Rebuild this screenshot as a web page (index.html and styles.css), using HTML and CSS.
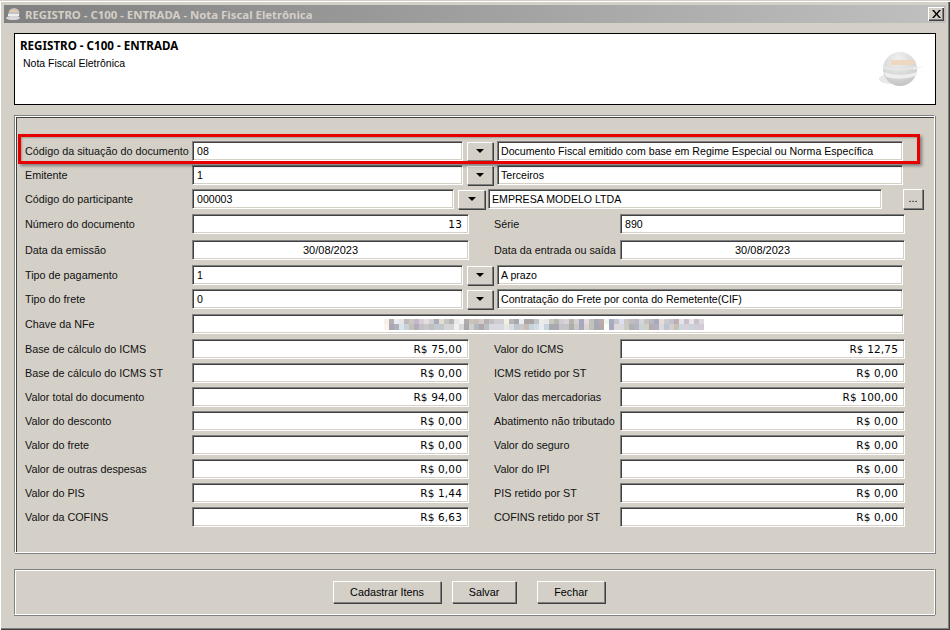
FILE: index.html
```html
<!DOCTYPE html>
<html lang="pt-BR">
<head>
<meta charset="utf-8">
<title>REGISTRO - C100 - ENTRADA</title>
<link rel="stylesheet" href="styles.css">
</head>
<body>
<div class="window">
  <div class="titlebar">
    <svg class="title-icon" width="16" height="14" viewBox="0 0 16 14"><ellipse cx="8" cy="6.500" rx="5.500" ry="5.500" fill="#c4c4c4"/><path d="M4 3h8v2H4z" fill="#e4c8a8"/><path d="M2 7h11v2H2z" fill="#eeeeee"/><ellipse cx="7" cy="11" rx="7" ry="2" fill="#d8d8d8"/></svg>
    <span class="title-text">REGISTRO - C100 - ENTRADA - Nota Fiscal Eletrônica</span>
    <span class="close"><svg width="9" height="8" viewBox="0 0 9 8"><path d="M0 0h2l2.500 3 2.500-3h2L5.500 4 9 8H7L4.500 5 2 8H0l3.500-4z" fill="#000"/></svg></span>
  </div>
  <div class="header">
    <div class="header-text">
      <div class="header-title">REGISTRO - C100 - ENTRADA</div>
      <div class="header-sub">Nota Fiscal Eletrônica</div>
    </div>
    <svg class="logo" width="48" height="38" viewBox="0 0 48 38">
      <defs>
        <radialGradient id="g" cx="0.45" cy="0.2" r="0.85"><stop offset="0" stop-color="#f0f0f0"/><stop offset="0.6" stop-color="#d8d8d8"/><stop offset="1" stop-color="#c0c0c0"/></radialGradient>
      </defs>
      <ellipse cx="12" cy="28" rx="12" ry="5" fill="#e8e8e8"/>
      <circle cx="21" cy="18" r="17" fill="url(#g)"/>
      <path d="M5 21 Q21 27 38 21 L37 25 Q21 30 7 26z" fill="#eeeeee"/>
      <path d="M4 15 Q21 19 38 15 L38 17 Q21 22 5 18z" fill="#e6e6e6"/>
      <path d="M12 9h23v5H12z" fill="#eed9c0"/>
      <path d="M34 17 L46 15 L34 19z" fill="#eeeeee"/>
    </svg>
  </div>
  <div class="panel">
    <div class="highlight"></div>
    <div class="row r1">
      <label class="lbl">Código da situação do documento</label>
      <div class="input combo">08</div><button class="drop"><i></i></button><div class="input desc">Documento Fiscal emitido com base em Regime Especial ou Norma Específica</div>
    </div>
    <div class="row">
      <label class="lbl">Emitente</label>
      <div class="input combo">1</div><button class="drop"><i></i></button><div class="input desc">Terceiros</div>
    </div>
    <div class="row">
      <label class="lbl">Código do participante</label>
      <div class="input combo-s">000003</div><button class="drop drop-s"><i></i></button><div class="input desc-s">EMPRESA MODELO LTDA</div><button class="more">...</button>
    </div>
    <div class="row gap5">
      <label class="lbl">Número do documento</label>
      <div class="input half num">13</div>
      <label class="lbl lbl2">Série</label>
      <div class="input half2">890</div>
    </div>
    <div class="row gap6">
      <label class="lbl">Data da emissão</label>
      <div class="input half center">30/08/2023</div>
      <label class="lbl lbl2">Data da entrada ou saída</label>
      <div class="input half2 center">30/08/2023</div>
    </div>
    <div class="row gap5">
      <label class="lbl">Tipo de pagamento</label>
      <div class="input combo">1</div><button class="drop"><i></i></button><div class="input desc">A prazo</div>
    </div>
    <div class="row">
      <label class="lbl">Tipo do frete</label>
      <div class="input combo">0</div><button class="drop"><i></i></button><div class="input desc">Contratação do Frete por conta do Remetente(CIF)</div>
    </div>
    <div class="row gap5">
      <label class="lbl">Chave da NFe</label>
      <div class="input key"><div class="blur"></div></div>
    </div>
    <div class="row gap5">
      <label class="lbl">Base de cálculo do ICMS</label>
      <div class="input half num">R$ 75,00</div>
      <label class="lbl lbl2">Valor do ICMS</label>
      <div class="input half2 num">R$ 12,75</div>
    </div>
    <div class="row">
      <label class="lbl">Base de cálculo do ICMS ST</label>
      <div class="input half num">R$ 0,00</div>
      <label class="lbl lbl2">ICMS retido por ST</label>
      <div class="input half2 num">R$ 0,00</div>
    </div>
    <div class="row">
      <label class="lbl">Valor total do documento</label>
      <div class="input half num">R$ 94,00</div>
      <label class="lbl lbl2">Valor das mercadorias</label>
      <div class="input half2 num">R$ 100,00</div>
    </div>
    <div class="row">
      <label class="lbl">Valor do desconto</label>
      <div class="input half num">R$ 0,00</div>
      <label class="lbl lbl2">Abatimento não tributado</label>
      <div class="input half2 num">R$ 0,00</div>
    </div>
    <div class="row">
      <label class="lbl">Valor do frete</label>
      <div class="input half num">R$ 0,00</div>
      <label class="lbl lbl2">Valor do seguro</label>
      <div class="input half2 num">R$ 0,00</div>
    </div>
    <div class="row">
      <label class="lbl">Valor de outras despesas</label>
      <div class="input half num">R$ 0,00</div>
      <label class="lbl lbl2">Valor do IPI</label>
      <div class="input half2 num">R$ 0,00</div>
    </div>
    <div class="row">
      <label class="lbl">Valor do PIS</label>
      <div class="input half num">R$ 1,44</div>
      <label class="lbl lbl2">PIS retido por ST</label>
      <div class="input half2 num">R$ 0,00</div>
    </div>
    <div class="row">
      <label class="lbl">Valor da COFINS</label>
      <div class="input half num">R$ 6,63</div>
      <label class="lbl lbl2">COFINS retido por ST</label>
      <div class="input half2 num">R$ 0,00</div>
    </div>
  </div>
  <div class="actions">
    <button class="btn btn-a">Cadastrar Itens</button>
    <button class="btn btn-b">Salvar</button>
    <button class="btn btn-c">Fechar</button>
  </div>
</div>
</body>
</html>
```
FILE: styles.css
```css
* { box-sizing: border-box; }
html, body { margin: 0; padding: 0; }
body { width: 950px; height: 630px; overflow: hidden; background: #d4d0c8; font-family: "Liberation Sans", Arial, sans-serif; font-size: 11px; color: #000; }
.window { position: relative; width: 950px; height: 630px; padding: 4px 4px 0; background: #d4d0c8; border-top: 1px solid #d4d0c8; box-shadow: inset 1px 1px 0 #fff, inset -1px -1px 0 #404040, inset -2px -2px 0 #808080; }
.titlebar { height: 18px; display: flex; align-items: center; padding: 0 2px 0 2px; background: linear-gradient(to right, #808080, #c0c0c0); }
.title-icon { margin-right: 3px; flex: none; }
.title-text { flex: 1; color: #d4d0c8; font-family: "Noto Sans", sans-serif; font-weight: bold; font-size: 11.4px; white-space: nowrap; }
.close { width: 16px; height: 14px; display: flex; align-items: center; justify-content: center; background: #d4d0c8; box-shadow: inset 1px 1px 0 #fff, inset -1px -1px 0 #404040, inset -2px -2px 0 #808080; }
.header { margin: 10px 10px 0; width: 922px; height: 72px; border: 1px solid #000; background: #fff; display: flex; justify-content: space-between; position: relative; }
.header-text { padding: 5px 5px; }
.header-title { font-family: "Noto Sans", sans-serif; font-weight: bold; font-size: 11.6px; line-height: 14px; }
.header-sub { margin: 4px 0 0 3px; line-height: 13px; font-size: 10.5px; }
.logo { margin: 17px 8px 0 0; }
.panel { position: relative; margin: 10px 0 0 10px; width: 921px; height: 438px; padding: 25px 0 0 10px; border: 1px solid #808080; border-right-color: #fff; border-bottom-color: #fff; box-shadow: inset 1px 1px 0 #fff, inset 2px 2px 0 #404040, 1px 1px 0 #808080; }
.highlight { position: absolute; left: 3px; top: 18px; width: 902px; height: 30px; border: 3px solid #e60000; box-shadow: 2px 2px 3px rgba(0,0,0,.4), inset 1px 1px 2px rgba(0,0,0,.25); pointer-events: none; }
.row { display: flex; align-items: center; height: 20px; margin-top: 4px; }
.r1 { margin-top: 0; }
.gap5 { margin-top: 5px; }
.gap6 { margin-top: 6px; }
.lbl { width: 167px; flex: none; white-space: nowrap; font-size: 10.8px; color: #111; }
.lbl2 { width: 126px; margin-left: 25px; }
.input { height: 20px; line-height: 18px; background: #fff; padding: 0 0 0 4px; white-space: nowrap; overflow: hidden; flex: none; border: 1px solid #808080; border-right-color: #fff; border-bottom-color: #fff; box-shadow: inset 1px 1px 0 #404040, inset -1px -1px 0 #d4d0c8; color: #000; font-size: 10.6px; }
.combo { width: 271px; }
.desc { width: 406px; margin-left: 4px; padding-left: 3px; }
.combo-s { width: 262px; }
.desc-s { width: 394px; margin-left: 3px; padding-left: 3px; }
.half { width: 277px; }
.half2 { width: 285px; }
.key { width: 712px; position: relative; }
.num { text-align: right; padding-right: 6px; font-family: "DejaVu Sans", sans-serif; font-size: 10.5px; letter-spacing: 0.15px; }
.center { text-align: center; padding-left: 0; font-family: "Liberation Sans", sans-serif; font-size: 11px; }
.drop { width: 26px; height: 19px; margin-left: 4px; padding: 0; flex: none; display: flex; align-items: center; justify-content: center; background: #d4d0c8; border: 1px solid #808080; border-top-color: #fff; border-left-color: #fff; box-shadow: 1px 1px 0 #404040; }
.drop-s { width: 27px; }
.drop i { display: block; width: 0; height: 0; border-left: 4px solid transparent; border-right: 4px solid transparent; border-top: 4px solid #000; }
.more { width: 20px; height: 20px; margin-left: 21px; padding: 0 0 2px; font: 11px "Liberation Sans", sans-serif; background: #d4d0c8; border: 1px solid #808080; border-top-color: #fff; border-left-color: #fff; box-shadow: 1px 1px 0 #404040; }
.blur { position: absolute; left: 191px; top: 4px; width: 320px; height: 11px; background-repeat: no-repeat; background-size: 100% 5px, 100% 6px; background-position: 0 0, 0 5px;
  background-image:
    linear-gradient(90deg, #f8f0e8 0 5px, #b4b0b0 5px 10px, #e8eef2 10px 15px, #e4e4e8 15px 20px, #c0b8b8 20px 25px, #c8c8c0 25px 30px, #c4b8c8 30px 35px, #d8d0d8 35px 40px, #e8dcd8 40px 45px, #d0d0d4 45px 50px, #a8acb8 50px 55px, #e4dcd0 55px 60px, #c4c4c4 60px 65px, #b8b4b4 65px 70px, #e8e8e8 70px 75px, #f2f2f2 75px 80px, #b0acac 80px 85px, #c8c4bc 85px 90px, #c8c0b8 90px 95px, #d0cccc 95px 100px, #b8b0b0 100px 105px, #c0c0c0 105px 110px, #d0ccd0 110px 120px, #f0f0e8 120px 125px, #b8b8b0 125px 130px, #a4a8b0 130px 135px, #ececec 135px 140px, #a8a4a8 140px 150px, #c0c4c4 150px 155px, #ececec 155px 160px, #e8e8e8 160px 165px, #c8c8c0 165px 170px, #b4b8b0 170px 175px, #d0ccd0 175px 180px, #d8d4d8 180px 185px, #b8b4ac 185px 190px, #d0d0d0 190px 195px, #a8a8c0 195px 200px, #e4dcdc 200px 205px, #c0c4b8 205px 210px, #a8a8b8 210px 215px, #b8acac 215px 220px, #f0f4ee 220px 225px, #a8acc0 225px 230px, #c8c4cc 230px 235px, #dcdff0 235px 240px, #c8c8c0 240px 245px, #c0bcc0 245px 250px, #b8b8c4 250px 255px, #d0d8d8 255px 260px, #c8c0bc 260px 265px, #b8b8c0 265px 270px, #a8a8bc 270px 275px, #e8dcd8 275px 280px, #c4ccd0 280px 285px, #c8c0c8 285px 290px, #b8b0b4 290px 295px, #e4e4e4 295px 300px, #c8c0cc 300px 305px, #e8e4e8 305px 310px, #c8c0cc 310px 315px, #dcd8dc 315px 320px),
    linear-gradient(90deg, #fbf4ee 0 5px, #a8a8b4 5px 10px, #b0b0b8 10px 15px, #d8e4ec 15px 20px, #c8d0d8 20px 25px, #c0c4b8 25px 30px, #b8acbc 30px 35px, #c4c0c8 35px 40px, #c8c8c8 40px 45px, #bcc0c0 45px 50px, #c4c8cc 50px 55px, #c0c8cc 55px 60px, #d4d4d4 60px 70px, #f0f0f0 70px 75px, #d8d8d8 75px 80px, #a8a8a8 80px 85px, #d0d0c8 85px 90px, #b0b8c0 90px 95px, #b0a8a8 95px 100px, #b8c0c0 100px 105px, #d8d8e0 105px 120px, #e8e8e0 120px 125px, #d8dce4 125px 130px, #c0c8c8 130px 135px, #c8c8d0 135px 140px, #c8bcb0 140px 145px, #c4d4dc 145px 150px, #d0dce4 150px 155px, #e8ecf0 155px 160px, #c8d4dc 160px 165px, #a8a8b0 165px 175px, #c4c4c8 175px 185px, #b0aca8 185px 190px, #c8c8c8 190px 195px, #a8a8b8 195px 200px, #dcd4d4 200px 205px, #c0c4b8 205px 210px, #a8a8b4 210px 215px, #b4a8a8 215px 220px, #fcfcf8 220px 225px, #a8a8c0 225px 230px, #dcd8dc 230px 240px, #c8ccc0 240px 245px, #b0b0b0 245px 250px, #b4b4c0 250px 255px, #c8d4d4 255px 260px, #d0d0c4 260px 265px, #b4acb0 265px 270px, #b0b0c0 270px 275px, #e0d8d8 275px 280px, #b8c8d0 280px 285px, #d4ccd0 285px 290px, #c8c0b0 290px 295px, #ccd8e0 295px 300px, #dcd0d8 300px 305px, #c8d4dc 305px 310px, #d4ccd4 310px 320px);
}
.actions { margin: 16px 0 0 10px; width: 921px; height: 46px; padding: 11px 0 0 20px; display: flex; border: 1px solid #808080; border-right-color: #fff; border-bottom-color: #fff; box-shadow: inset 1px 1px 0 #fff, 0 1px 0 #808080, 1px 0 0 #808080; }
.btn { height: 22px; padding: 0 0 1px; background: #d4d0c8; font: 10.8px "Liberation Sans", sans-serif; color: #000; border: 1px solid #808080; border-top-color: #fff; border-left-color: #fff; box-shadow: 1px 1px 0 #404040; }
.btn-a { width: 108px; margin-left: 298px; }
.btn-b { width: 64px; margin-left: 11px; }
.btn-c { width: 68px; margin-left: 21px; }
```
